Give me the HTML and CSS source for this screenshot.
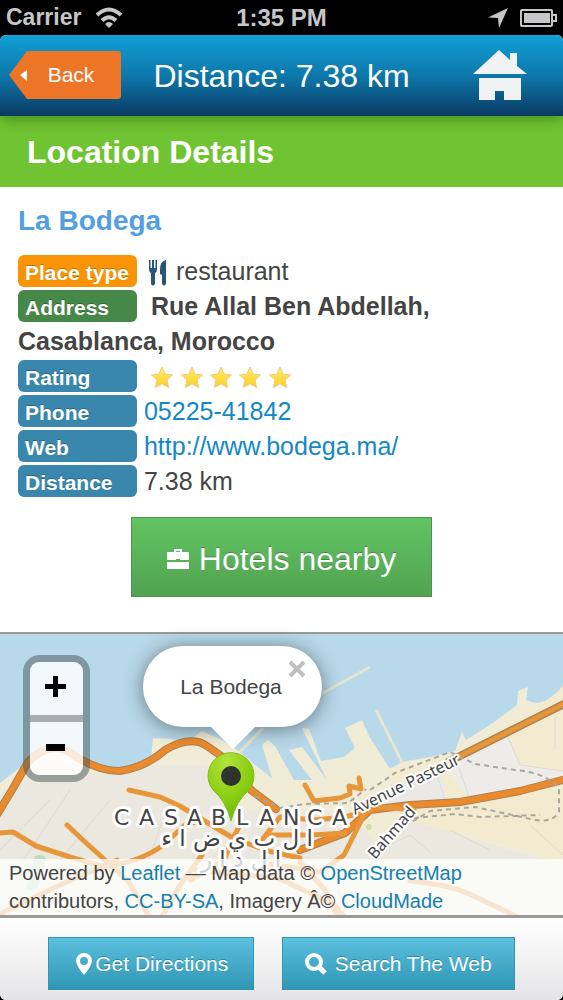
FILE: index.html
```html
<!DOCTYPE html>
<html lang="en">
<head>
<meta charset="utf-8">
<meta name="viewport" content="width=device-width, initial-scale=1">
<title>Location Details</title>
<link rel="stylesheet" href="styles.css">
</head>
<body>
<div class="status-bar">
  <div class="status-left">
    <span>Carrier</span>
    <svg class="wifi" viewBox="0 0 28 21" width="28" height="21" aria-hidden="true">
      <g fill="none" stroke="#c6c5c8" stroke-width="4"><path d="M2 8Q14 -3 26 8"/><path d="M7 13.500Q14 7 21 13.500"/></g>
      <path d="M10 17Q14 13 18 17L14 21Z" fill="#c6c5c8"/>
    </svg>
  </div>
  <span class="clock">1:35 PM</span>
  <div class="status-right">
    <svg viewBox="0 0 20 20" width="20" height="20" aria-hidden="true"><path d="M20 0L11 20L10 10L0 9.500Z" fill="#c6c5c8"/></svg>
    <svg viewBox="0 0 37 18" width="37" height="18" aria-hidden="true"><rect x="1" y="1" width="31" height="16" rx="1" fill="none" stroke="#c6c5c8" stroke-width="2"/><rect x="4" y="4" width="26" height="10" fill="#c6c5c8"/><path d="M33 6h3v6h-3" fill="none" stroke="#c6c5c8" stroke-width="2"/></svg>
  </div>
</div>

<div class="app">
  <header class="header">
    <button class="back" type="button">
      <svg class="back-shape" viewBox="0 0 112 48" width="112" height="48" aria-hidden="true"><path d="M18 0H109Q112 0 112 3V45Q112 48 109 48H18L0 24Z" fill="#ec7528"/><path d="M11 24L18 19V30Z" fill="#fff"/></svg>
      <span class="back-label">Back</span>
    </button>
    <h1 class="header-title">Distance: 7.38 km</h1>
    <button class="home" type="button" aria-label="Home">
      <svg viewBox="0 0 54 50" width="54" height="50" aria-hidden="true"><path d="M0 24L26 0L37 10V3H44V16L54 24ZM6 28H48V50H31V41H22V50H6Z" fill="#f1f2f4"/></svg>
    </button>
  </header>

  <h2 class="section-title">Location Details</h2>

  <main class="details">
    <h3 class="place-name">La Bodega</h3>
    <div class="row"><span class="tag tag-type">Place type</span>
      <svg class="cutlery" viewBox="0 0 19 26" width="19" height="26" aria-hidden="true"><path d="M1 0V9Q1 12 3 13V24Q5 27 7 24V13Q9 12 9 9V0H7.500V8H6V0H4V8H2.500V0ZM18 0Q12 1 12 9V14L14 15V24Q16 27 18 24Z" fill="#285679"/></svg>
      restaurant</div>
    <div class="row"><span class="tag tag-address">Address</span> <strong class="address">Rue Allal Ben Abdellah, Casablanca, Morocco</strong></div>
    <div class="row"><span class="tag">Rating</span>
      <svg class="stars" viewBox="0 0 142 24" width="142" height="24" role="img" aria-label="5 of 5 stars">
        <defs>
          <linearGradient id="gold" x2="0" y2="1"><stop offset="0" stop-color="#fff16b"/><stop offset="1" stop-color="#fbcd23"/></linearGradient>
          <path id="star" d="M12 1L15.200 8.200L22.500 9L17 14L18.600 21.500L12 17.800L5.400 21.500L7 14L1.500 9L8.800 8.200Z" fill="url(#gold)" stroke="#f2c87e" stroke-linejoin="round"/>
        </defs>
        <use href="#star"/><use href="#star" x="30"/><use href="#star" x="59"/><use href="#star" x="88"/><use href="#star" x="118"/>
      </svg></div>
    <div class="row"><span class="tag">Phone</span> <a href="tel:0522541842">05225-41842</a></div>
    <div class="row"><span class="tag">Web</span> <a href="http://www.bodega.ma/">http://www.bodega.ma/</a></div>
    <div class="row"><span class="tag">Distance</span> 7.38 km</div>
    <button class="hotels" type="button">
      <svg viewBox="0 0 22 20" width="22" height="20" aria-hidden="true"><path fill-rule="evenodd" d="M7 3V0H15V3H22V11H13V10H9V11H0V3ZM9 3H13V2H9ZM0 13H22V20H0Z" fill="#fff"/></svg>
      Hotels nearby
    </button>
  </main>

  <section class="map" aria-label="Map">
    <svg class="tiles" viewBox="0 634 563 281" preserveAspectRatio="xMidYMid slice">
      <defs>
        <radialGradient id="pin" cx=".4" cy=".15" r="1"><stop offset="0" stop-color="#b3e43c"/><stop offset=".5" stop-color="#8bcf14"/><stop offset="1" stop-color="#62a90b"/></radialGradient>
      </defs>
      <rect y="600" width="563" height="340" fill="#b8d9ea"/>
      <path d="M0 783L22 766L45 748L72 756L98 771L125 772L151 758L153 738L172 739L186 743L202 731L222 740L240 752L254 764L272 778L262 745L268 740L275 746L294 780H312L289 750L302 747L327 780L302 728L309 729L321 761L344 757L355 748L345 728L362 720L369 736L390 769L402 762L430 757L455 751L462 732L466 740L490 725L517 705L518 691L528 687L526 700Q540 707 553 696L563 686V940H0Z" fill="#f1ecd6"/>
      <path d="M0 795L45 755L96 775L150 765L205 765L245 810L350 812L380 850L410 820L563 865V940H0Z" fill="#ebe9df"/>
      <path d="M390 768L452 755L540 705L563 688V860L400 818Z" fill="#f3ebd0"/>
      <path d="M445 769L508 737L520 765L563 772V782L475 804Z" fill="#eeece8"/>
      <path d="M390 785L440 767L448 802L380 808Z" fill="#eae9e5"/>
      <path d="M323 693L370 667M240 752L263 728M376 710L402 762" fill="none" stroke="#e6e4cf" stroke-width="3"/>
      <path d="M35 856Q45 853 46 860L39 884Q35 895 26 888Z" fill="#bcdcbb"/>
      <circle cx="369" cy="827" r="3" fill="#d0df9f"/>
      <g fill="none" stroke="#dcd9d8" stroke-width="1">
        <path d="M508 737L520 765L563 771M555 717V750M458 765L470 800M437 775L446 803M0 850L50 800M20 865L70 790M110 800L60 860M145 870L170 800M450 830L490 850M380 850L410 835L430 852M530 825L563 855"/>
      </g>
      <g fill="none" stroke-linejoin="round" stroke-linecap="round">
        <g stroke="#aa8054" stroke-width="8">
          <path d="M-5 818L12 790L28 762Q47 742 68 751Q95 771 120 771Q146 767 165 750Q191 735 207 746L230 762L251 790L276 809"/>
          <path d="M566 703L520 726L490 741L448 762"/>
          <path d="M566 779L520 791L460 802L410 805L370 810L345 833L300 850"/>
        </g>
        <g stroke="#eb8a2c" stroke-width="6">
          <path d="M-5 818L12 790L28 762Q47 742 68 751Q95 771 120 771Q146 767 165 750Q191 735 207 746L230 762L251 790L276 809"/>
          <path d="M566 779L520 791L460 802L410 805L370 810L345 833L300 850"/>
        </g>
        <g stroke="#e8963a" stroke-width="5">
          <path d="M566 703L520 726L490 741L448 762"/>
          <path d="M129 790L160 797L180 806L203 820L233 838L268 851L300 858M0 833L13 832L36 846L70 857L105 867Q139 862 162 846L185 825L202 820M67 825L85 842L104 859L128 881L149 916M117 860L60 885L0 914M202 855L180 885L163 915M240 825L233 838L224 860L190 880M262 840L280 817L315 820L345 817L370 810M270 835H312L345 833M305 785L314 801L340 798L350 794L349 786L361 789L359 778M366 811L344 855L320 872L270 864M380 807L414 810M195 870L278 878L335 905L345 918M300 862L325 890L338 918M410 881Q455 885 480 899L520 918"/>
        </g>
      </g>
      <g fill="none" stroke="#aaa89e" stroke-width="2" stroke-dasharray="5 4">
        <path d="M370 790L395 773L450 752L475 764L515 770Q548 773 559 789V812Q552 824 531 819L475 807L430 811L408 824M414 818L455 814L480 817L540 815M255 796L280 808L305 804L348 803L366 789"/>
      </g>
      <g class="map-label">
        <text class="city" x="114 139 164 187 211 236 259 283 307 332" y="825">CASABLANCA</text>
        <text class="arabic" x="237" y="846" text-anchor="middle">ا ل ب ي ض ا ء</text>
        <text class="arabic" x="241" y="867" text-anchor="middle">ا ل د ا ر</text>
        <text class="street" transform="translate(355 815) rotate(-26)">Avenue Pasteur</text>
        <text class="street" transform="translate(375 860) rotate(-49)">Bahmad</text>
      </g>
      <path d="M231 821Q226 801 213 790A23 23 0 1 1 249 790Q236 801 231 821Z" fill="url(#pin)" stroke="#83bd25"/>
      <circle cx="231" cy="776" r="10" fill="#30332e"/>
    </svg>
    <div class="popup">
      <span>La Bodega</span>
      <button class="popup-close" type="button" aria-label="Close"><svg viewBox="0 0 18 18" width="18" height="18" aria-hidden="true"><path d="M2 2L16 16M16 2L2 16" stroke="#bfbfbf" stroke-width="4"/></svg></button>
    </div>
    <div class="zoom">
      <button type="button" aria-label="Zoom in"><svg viewBox="0 0 21 21" width="21" height="21" aria-hidden="true"><path d="M0 10.500H21M10.500 0V21" stroke="#000" stroke-width="5"/></svg></button>
      <button type="button" aria-label="Zoom out"><svg viewBox="0 0 21 21" width="21" height="21" aria-hidden="true"><path d="M1 10.500H20" stroke="#000" stroke-width="7"/></svg></button>
    </div>
    <div class="attribution">Powered by <a href="#">Leaflet</a> — Map data © <a href="#">OpenStreetMap</a> contributors, <a href="#">CC-BY-SA</a>, Imagery Â© <a href="#">CloudMade</a></div>
  </section>

  <footer class="footer">
    <button class="action directions" type="button"><svg viewBox="0 0 16 22" width="16" height="22" aria-hidden="true"><path fill-rule="evenodd" d="M8 0A8 8 0 0 1 16 8Q15 14 8 22Q1 14 0 8A8 8 0 0 1 8 0ZM8 4A4 4 0 1 0 8 12A4 4 0 1 0 8 4Z" fill="#fff"/></svg>Get Directions</button>
    <button class="action search" type="button"><svg viewBox="0 0 22 22" width="22" height="22" aria-hidden="true"><circle cx="9" cy="9" r="7" fill="none" stroke="#fff" stroke-width="4"/><path d="M14 14L20 20" stroke="#fff" stroke-width="5"/></svg>Search The Web</button>
  </footer>
</div>
</body>
</html>
```

FILE: styles.css
```css
* { box-sizing: border-box; }
body {
  margin: 0;
  min-height: 100vh;
  display: flex;
  flex-direction: column;
  background: #000;
  color: #444;
  font-family: "Liberation Sans", Arial, sans-serif;
}
button {
  border: 0;
  padding: 0;
  background: none;
  font-family: inherit;
  cursor: pointer;
}
svg { display: block; flex: none; }
a { color: #1488c6; text-decoration: none; }

.status-bar {
  height: 35px;
  padding: 0 6px;
  display: grid;
  grid-template-columns: 1fr auto 1fr;
  align-items: center;
  color: #c6c5c8;
  font-size: 23px;
  font-weight: bold;
}
.clock { font-size: 24px; }
.status-left, .status-right { display: flex; align-items: center; }
.status-left { gap: 14px; }
.status-right { justify-content: flex-end; gap: 12px; }

.app {
  flex: 1;
  display: flex;
  flex-direction: column;
  overflow: hidden;
  border-radius: 6px;
  background: #fff;
}
.header {
  height: 81px;
  padding: 0 9px 1px;
  display: grid;
  grid-template-columns: 1fr auto 1fr;
  align-items: center;
  position: relative;
  background: linear-gradient(#11a0d7, #0d78aa 50%, #0a3a63);
  box-shadow: 0 2px 14px rgba(0, 50, 0, .45);
}
.back {
  justify-self: start;
  display: grid;
  align-items: center;
  color: #fff;
  font-size: 21px;
}
.back-shape, .back-label { grid-area: 1 / 1; }
.back-label { padding-left: 12px; }
.header-title {
  margin: 0;
  padding-top: 2px;
  color: #fff;
  font-size: 32px;
  font-weight: normal;
  white-space: nowrap;
}
.home { justify-self: end; margin-right: 27px; }

.section-title {
  margin: 0;
  padding: 2px 27px 0;
  color: #fff;
  background: #71c431;
  font-size: 32px;
  line-height: 69px;
}

.details { padding: 17px 18px 35px; }
.place-name {
  margin: 0 0 17px;
  color: #529fe3;
  font-size: 28px;
  line-height: 33px;
}
.row { font-size: 25px; line-height: 35px; }
.tag {
  display: inline-block;
  width: 119px;
  height: 32px;
  padding-left: 7px;
  border-radius: 6px;
  background: #3a87ad;
  color: #fff;
  font-size: 21px;
  font-weight: bold;
  line-height: 35px;
  text-shadow: 0 -1px 0 rgba(0, 0, 0, .25);
  white-space: nowrap;
}
.tag-type { background: #f89406; }
.tag-address { background: #468847; }
.cutlery { display: inline-block; margin: 0 2px 0 4px; vertical-align: middle; }
.address { padding-left: 7px; }
.stars { display: inline-block; margin-left: 6px; vertical-align: middle; }
.hotels {
  width: 301px;
  height: 80px;
  margin: 18px auto 0;
  padding-top: 4px;
  display: flex;
  align-items: center;
  justify-content: center;
  gap: 10px;
  border: 1px solid #4d9050;
  background: linear-gradient(#62c462, #51a351);
  color: #fff;
  font-size: 32px;
  line-height: 40px;
  text-shadow: 0 -1px 0 rgba(0, 0, 0, .25);
}

.map {
  flex: 1;
  min-height: 286px;
  position: relative;
  border-top: 2px solid #999;
  border-bottom: 3px solid #999;
}
.tiles { position: absolute; inset: 0; width: 100%; height: 100%; }
.map-label text {
  fill: #444;
  stroke: #fff;
  stroke-width: 6px;
  stroke-linejoin: round;
  paint-order: stroke;
  font-family: "DejaVu Sans", sans-serif;
}
.map-label .city { font-size: 22px; }
.map-label .arabic { font-size: 23px; direction: rtl; }
.map-label .street { font-family: "Noto Sans", sans-serif; font-size: 16px; stroke-width: 4px; }
.popup {
  position: absolute;
  top: 12px;
  left: 143px;
  width: 179px;
  height: 81px;
  padding-right: 3px;
  display: flex;
  align-items: center;
  justify-content: center;
  border-radius: 40px;
  background: #fff;
  box-shadow: 0 2px 20px rgba(0, 0, 0, .45);
  font-size: 21px;
}
.popup::after {
  content: "";
  position: absolute;
  top: 100%;
  left: 50%;
  margin-left: -22px;
  border: 22px solid transparent;
  border-top-color: #fff;
  border-bottom: 0;
}
.popup-close { position: absolute; top: 14px; right: 16px; }
.zoom {
  position: absolute;
  top: 21px;
  left: 23px;
  display: grid;
  border: 7px solid rgba(70, 85, 88, .5);
  border-radius: 17px;
}
.zoom button {
  width: 53px;
  height: 53px;
  padding: 0 3px 2px 0;
  display: grid;
  place-items: center;
  background: rgba(255, 255, 255, .82);
}
.zoom button:first-child {
  height: 60px;
  padding-bottom: 4px;
  border-bottom: 7px solid #a9adaf;
  border-radius: 9px 9px 0 0;
  background-clip: padding-box;
}
.zoom button:last-child { border-radius: 0 0 9px 9px; }
.attribution {
  position: absolute;
  right: 0;
  bottom: 0;
  left: 0;
  padding: 0 100px 0 9px;
  background: rgba(255, 255, 255, .75);
  font-size: 20px;
  line-height: 28px;
}
.attribution a { color: #1480ae; }

.footer {
  height: 82px;
  padding: 0 48px 10px;
  display: flex;
  align-items: flex-end;
  gap: 28px;
  background: linear-gradient(#fff, #e4e4e6);
}
.action {
  height: 53px;
  display: flex;
  align-items: center;
  justify-content: center;
  border: 1px solid #3694b0;
  background: linear-gradient(#5bc0de, #2f96b4);
  color: #fff;
  font-size: 21px;
  text-shadow: 0 -1px 0 rgba(0, 0, 0, .25);
  white-space: nowrap;
}
.directions { width: 206px; gap: 3px; padding-left: 3px; }
.search { width: 234px; gap: 8px; }
```
